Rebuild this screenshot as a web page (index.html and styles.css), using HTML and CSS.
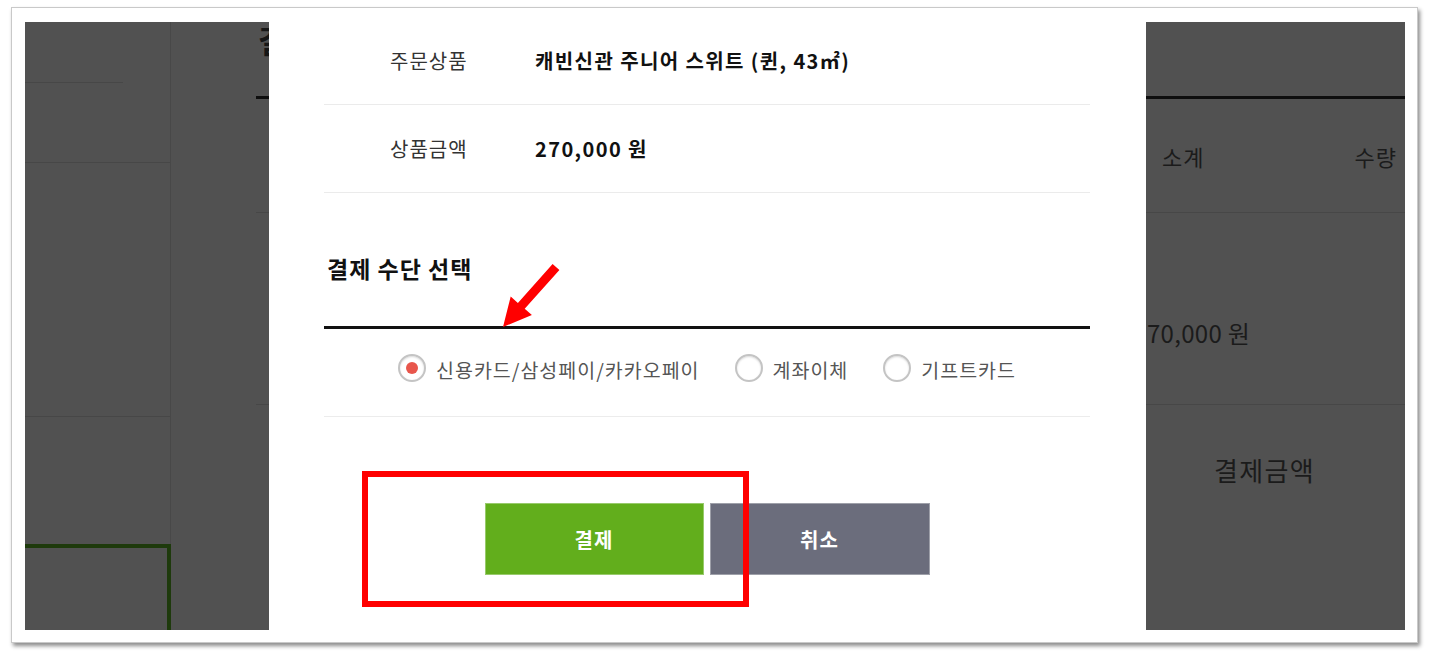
FILE: index.html
```html
<!DOCTYPE html>
<html>
	<head>
		<meta charset="utf-8" />
		<title>결제 수단 선택</title>
		<link rel="stylesheet" href="styles.css">
	</head>
	<body>
	<div class="frame">
		<div class="shot">
			<!-- page behind the popup (dimmed) -->
			<div class="bg-left">
				<div class="col-a">
					<div class="a1"></div>
					<div class="a2"></div>
					<div class="a3"></div>
					<div class="a4"></div>
					<div class="green-box"></div>
				</div>
				<div class="col-b">
					<div class="b-title">결제</div>
					<div class="b-row1"></div>
					<div class="b-row2"></div>
				</div>
			</div>

			<div class="modal">
				<div class="info-row first">
					<span class="label">주문상품</span>
					<span class="value">캐빈신관 주니어 스위트 (퀸, 43㎡)</span>
				</div>
				<div class="info-row">
					<span class="label">상품금액</span>
					<span class="value">270,000 원</span>
				</div>
				<h3 class="pay-title">결제 수단 선택</h3>
				<div class="pay-options">
					<label class="opt"><span class="radio checked"></span>신용카드/삼성페이/카카오페이</label>
					<label class="opt"><span class="radio"></span>계좌이체</label>
					<label class="opt"><span class="radio"></span>기프트카드</label>
				</div>
				<div class="btns">
					<button type="button" class="btn-pay">결제</button>
					<button type="button" class="btn-cancel">취소</button>
				</div>
			</div>

			<div class="bg-right">
				<div class="r-head"></div>
				<div class="r-cols"><span>소계</span><span>수량</span></div>
				<div class="r-price">70,000 원</div>
				<div class="r-total">결제금액</div>
			</div>
		</div>
	</div>

	<!-- annotations -->
	<div class="mark-box"></div>
	<svg class="mark-arrow" width="70" height="80" viewBox="0 0 70 80">
		<polygon points="57.6,9.1 64.4,14.9 29.7,53.7 36.9,60 8,72 15.7,41.6 22.9,47.9" fill="#ff0000" />
	</svg>
	</body>
</html>
```

FILE: styles.css
```css
* {
	box-sizing: border-box;
}
body {
	margin: 0;
	background-color: #ffffff;
	font-family: "Noto Sans CJK KR", "Noto Sans", sans-serif;
	color: #222;
	position: relative;
	height: 659px;
	overflow: hidden;
}
.frame {
	margin: 7px 0 0 11px;
	width: 1407px;
	height: 636px;
	border: 1px solid #c9c9c9;
	padding: 14px 12px 12px 13px;
	background-color: #ffffff;
	box-shadow: 2px 3px 4px rgba(0, 0, 0, 0.45);
}
.shot {
	display: flex;
	width: 1380px;
	height: 608px;
	overflow: hidden;
}

/* dimmed page */
.bg-left {
	width: 244px;
	display: flex;
	background-color: #515151;
}
.col-a {
	width: 146px;
	display: flex;
	flex-direction: column;
	border-right: 1px solid #484848;
}
.a1 {
	width: 98px;
	height: 61px;
	border-bottom: 1px solid #474747;
}
.a2 {
	height: 80px;
	border-bottom: 1px solid #474747;
}
.a3 {
	height: 254px;
	border-bottom: 1px solid #474747;
}
.a4 {
	height: 127px;
}
.green-box {
	flex: 1;
	border-top: 4px solid #1e3a0c;
	border-right: 4px solid #1e3a0c;
	margin-right: -1px;
}
.col-b {
	width: 98px;
	padding-left: 85px;
	overflow: hidden;
}
.b-title {
	height: 77px;
	border-bottom: 3px solid #0e0e0e;
	padding-left: 2px;
	font-size: 31px;
	font-weight: bold;
	line-height: 36px;
	color: #161616;
	white-space: nowrap;
}
.b-row1 {
	height: 114px;
	border-bottom: 1px solid #474747;
}
.b-row2 {
	height: 192px;
	border-bottom: 1px solid #474747;
}

.bg-right {
	width: 259px;
	background-color: #515151;
	color: #1b1b1b;
	white-space: nowrap;
}
.r-head {
	height: 77px;
	border-bottom: 3px solid #0e0e0e;
}
.r-cols {
	height: 114px;
	border-bottom: 1px solid #474747;
	display: flex;
	justify-content: space-between;
	align-items: center;
	padding: 0 8px 0 16px;
	font-size: 22px;
	letter-spacing: 1px;
}
.r-price {
	height: 192px;
	border-bottom: 1px solid #474747;
	padding-top: 104px;
	padding-left: 1px;
	font-size: 24px;
	line-height: 32px;
	letter-spacing: 0.3px;
}
.r-total {
	padding-top: 47px;
	padding-left: 68px;
	font-size: 26px;
	line-height: 36px;
	letter-spacing: 1.3px;
}

/* popup */
.modal {
	width: 877px;
	padding: 0 56px 0 55px;
	background-color: #ffffff;
}
.info-row {
	height: 88px;
	display: flex;
	align-items: center;
	padding-left: 66px;
	border-bottom: 1px solid #ebebeb;
	font-size: 20px;
	line-height: 28px;
	letter-spacing: 1px;
}
.info-row.first {
	height: 83px;
	padding-bottom: 5px;
}
.label {
	width: 145px;
	color: #333;
}
.value {
	font-weight: bold;
	color: #111;
	letter-spacing: 1.4px;
}
.pay-title {
	margin: 0;
	height: 136px;
	padding: 60px 0 0 3px;
	font-size: 23px;
	line-height: 30px;
	letter-spacing: 1px;
	font-weight: bold;
	color: #111;
	border-bottom: 3px solid #111;
}
.pay-options {
	height: 88px;
	padding-top: 26px;
	display: flex;
	justify-content: center;
	gap: 35px;
	border-bottom: 1px solid #ececec;
}
.opt {
	display: flex;
	align-items: center;
	gap: 10px;
	height: 28px;
	font-size: 19.5px;
	letter-spacing: 1px;
	color: #555;
	white-space: nowrap;
}
.radio {
	width: 28px;
	height: 28px;
	flex: none;
	border-radius: 50%;
	border: 2px solid #c4c4c4;
	background-color: #fff;
	box-shadow: inset 0 1px 2px rgba(0, 0, 0, 0.15);
	display: flex;
	align-items: center;
	justify-content: center;
	margin-top: -3px;
}
.radio.checked::after {
	content: "";
	width: 12px;
	height: 12px;
	border-radius: 50%;
	background-color: #e8564c;
}
.btns {
	margin-top: 86px;
	display: flex;
	justify-content: center;
	gap: 6px;
}
.btns button {
	height: 72px;
	border: 1px solid rgba(255, 255, 255, 0.35);
	font-family: "Noto Sans CJK KR", "Noto Sans", sans-serif;
	font-size: 20px;
	letter-spacing: 1px;
	font-weight: bold;
	color: #ffffff;
	padding: 0;
}
.btn-pay {
	width: 219px;
	background-color: #62ae1c;
}
.btn-cancel {
	width: 220px;
	background-color: #6b6d7c;
}

/* red annotations drawn over the capture */
.mark-box {
	position: absolute;
	left: 362px;
	top: 471px;
	width: 387px;
	height: 136px;
	border: 6px solid #ff0000;
}
.mark-arrow {
	position: absolute;
	left: 495px;
	top: 255px;
}
```
